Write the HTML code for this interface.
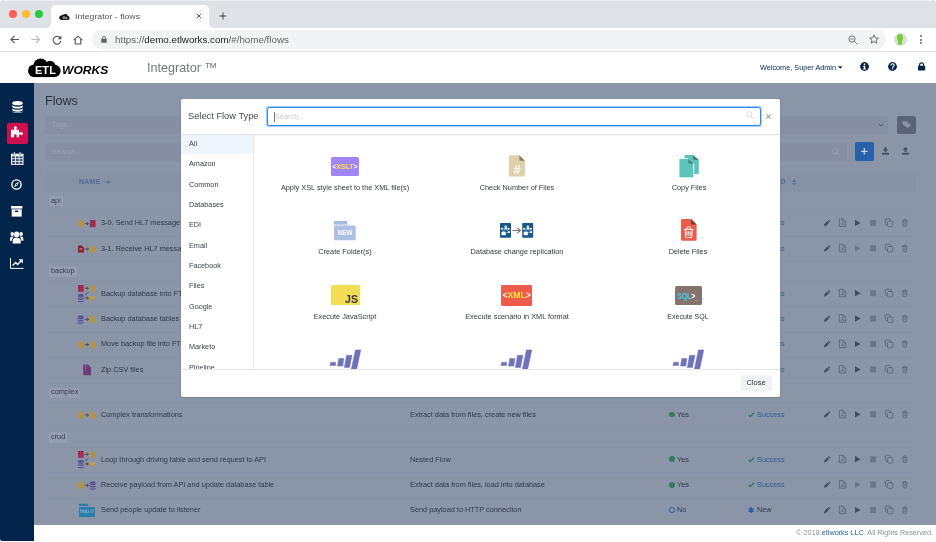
<!DOCTYPE html>
<html lang="en">
<head>
<meta charset="utf-8">
<title>Integrator - flows</title>
<style>
*{box-sizing:border-box;margin:0;padding:0}
html,body{width:936px;height:542px;overflow:hidden;background:#fff}
body{font-family:"Liberation Sans",sans-serif;color:#23282c;position:relative;font-size:7.8px}
.a{position:absolute}
.t{position:absolute;white-space:nowrap}
svg{position:absolute;overflow:visible}
#w{position:absolute;left:0;top:0;width:936px;height:542px;will-change:transform;overflow:hidden}

</style>
</head>
<body>
<div id="w">
<!-- browser chrome -->
<div class="a" style="left:0px;top:0px;width:936px;height:27.7px;background:#dee1e6;border-radius:3px 3px 0 0"></div>
<div class="a" style="left:3px;top:0px;width:930px;height:1px;background:#eaecef;"></div>
<div class="a" style="left:8.7px;top:10.2px;width:8px;height:8px;background:#fe5f57;border-radius:50%"></div>
<div class="a" style="left:21.8px;top:10.2px;width:8px;height:8px;background:#febc2e;border-radius:50%"></div>
<div class="a" style="left:35px;top:10.2px;width:8px;height:8px;background:#28c840;border-radius:50%"></div>
<div class="a" style="left:51px;top:4.8px;width:158px;height:23px;background:#fff;border-radius:5px 5px 0 0"></div>
<svg style="left:45px;top:21.7px" width="170" height="6" viewBox="0 0 170 6"><path d="M0 6 Q6 6 6 0 V6 Z M170 6 Q164 6 164 0 V6 Z" fill="#fff"/></svg>
<svg style="left:59px;top:12.5px" width="11" height="7" viewBox="0 0 22 14"><path d="M5 14 A4.5 4.5 0 0 1 4.5 5 A4 4 0 0 1 9 3.5 A5 5 0 0 1 17.5 5.5 A4.3 4.3 0 0 1 17.5 14 Z" fill="#111"/><circle cx="10" cy="9.3" r="2.2" fill="none" stroke="#fff" stroke-width="1.3"/><circle cx="15" cy="10.2" r="1.5" fill="none" stroke="#fff" stroke-width="1.2"/></svg>
<div class="t" style="top:12.90px;font-size:7.8px;line-height:7.8px;color:#505458;left:75px;transform:scaleX(1.12);transform-origin:0 50%;">Integrator - flows</div>
<svg style="left:195.5px;top:12.7px" width="6" height="6" viewBox="0 0 6 6"><path d="M.7 .7 L5.3 5.3 M5.3 .7 L.7 5.3" stroke="#45494d" stroke-width=".9" fill="none"/></svg>
<svg style="left:219px;top:12px" width="8" height="8" viewBox="0 0 8 8"><path d="M4 .6 V7.4 M.6 4 H7.4" stroke="#45494d" stroke-width="1" fill="none"/></svg>
<div class="a" style="left:0px;top:27.7px;width:936px;height:23.3px;background:#fff;"></div>
<div class="a" style="left:0px;top:50.8px;width:936px;height:0.8px;background:#dfe1e4;"></div>
<div class="a" style="left:91.8px;top:30.4px;width:794px;height:18.2px;background:#f1f3f4;border-radius:9.1px"></div>
<svg style="left:10px;top:35px" width="9.5" height="9" viewBox="0 0 9.5 9"><path d="M9 4.5 H1 M4.6 .8 L.9 4.5 L4.6 8.2" stroke="#51565b" stroke-width="1.12" fill="none"/></svg>
<svg style="left:31px;top:35px" width="9.5" height="9" viewBox="0 0 9.5 9"><path d="M.5 4.5 H8.5 M4.9 .8 L8.6 4.5 L4.9 8.2" stroke="#b4b8bd" stroke-width="1.2" fill="none"/></svg>
<svg style="left:51.7px;top:34.6px" width="10" height="10" viewBox="0 0 10 10"><path d="M8.2 3 A3.9 3.9 0 1 0 8.9 5.8" stroke="#51565b" stroke-width="1.12" fill="none"/><path d="M9.4 .5 V4.2 H5.7 Z" fill="#51565b"/></svg>
<svg style="left:72.7px;top:34.6px" width="10" height="10" viewBox="0 0 10 10"><path d="M.6 5.2 L5 1.2 L9.4 5.2 M2.2 4 V9 H7.8 V4" stroke="#51565b" stroke-width="1.12" fill="none" stroke-linejoin="miter"/></svg>
<svg style="left:101px;top:36px" width="6" height="7" viewBox="0 0 6 7"><rect x=".3" y="2.8" width="5.4" height="4" rx=".5" fill="#5f6368"/><path d="M1.5 3 V2 A1.5 1.5 0 0 1 4.5 2 V3" stroke="#5f6368" stroke-width=".9" fill="none"/></svg>
<div class="t" style="top:35.60px;font-size:9.1px;line-height:9.1px;color:#202124;left:114.7px;transform:scaleX(1.075);transform-origin:0 50%;"><span style="color:#5f6368">https://</span>demo.etlworks.com<span style="color:#5f6368">/#/home/flows</span></div>
<svg style="left:848px;top:34.5px" width="10" height="10" viewBox="0 0 10 10"><circle cx="4" cy="4" r="3.1" stroke="#5f6368" stroke-width=".9" fill="none"/><path d="M6.3 6.3 L9.3 9.3 M2.5 4 H5.5" stroke="#5f6368" stroke-width=".9" fill="none"/></svg>
<svg style="left:869px;top:34.3px" width="10" height="10" viewBox="0 0 10 10"><path d="M5 .9 L6.25 3.8 L9.4 4.05 L7 6.1 L7.75 9.2 L5 7.55 L2.25 9.2 L3 6.1 L.6 4.05 L3.75 3.8 Z" stroke="#5f6368" stroke-width=".9" fill="none" stroke-linejoin="round"/></svg>
<div class="a" style="left:893.7px;top:32.9px;width:13px;height:13px;background:#dadce0;border-radius:50%"></div>
<svg style="left:896.2px;top:34.4px" width="8" height="10.5" viewBox="0 0 8 10.5"><path d="M4 0 C6.4 0 7.3 2 7 4.3 C6.8 6 6 6.8 5.8 8 L6.2 10.5 H1.8 L2.2 8 C2 6.8 1.2 6 1 4.3 C.7 2 1.6 0 4 0 Z" fill="#76d02b"/></svg>
<div class="a" style="left:920.3px;top:34.7px;width:2px;height:2px;background:#5f6368;border-radius:50%"></div>
<div class="a" style="left:920.3px;top:38.5px;width:2px;height:2px;background:#5f6368;border-radius:50%"></div>
<div class="a" style="left:920.3px;top:42.3px;width:2px;height:2px;background:#5f6368;border-radius:50%"></div>
<!-- app header -->
<div class="a" style="left:0px;top:51.7px;width:936px;height:31.3px;background:#fff;"></div>
<svg style="left:28px;top:58px" width="33" height="19.4" viewBox="0 0 33 19.4"><g fill="#000"><circle cx="6.3" cy="12.8" r="6.3"/><circle cx="26.4" cy="12.9" r="6.2"/><circle cx="12.6" cy="7.6" r="7.2"/><circle cx="22" cy="8.4" r="5.6"/><rect x="6.3" y="8" width="20.1" height="11.1"/></g></svg>
<div class="t" style="top:64.59px;font-size:11px;line-height:11px;color:#fff;font-weight:bold;letter-spacing:0.1px;left:34.9px;transform:scaleX(1.0);transform-origin:0 50%;">ETL</div>
<div class="t" style="top:64.59px;font-size:11px;line-height:11px;color:#000;font-weight:bold;left:62.4px;transform:scaleX(1.1);transform-origin:0 50%;font-style:italic;">WORKS</div>
<div class="t" style="top:60.80px;font-size:13px;line-height:13px;color:#73777b;left:147px;transform:scaleX(0.97);transform-origin:0 50%;">Integrator ™</div>
<div class="t" style="top:63.70px;font-size:7.8px;line-height:7.8px;color:#03254c;left:759.6px;transform:scaleX(0.935);transform-origin:0 50%;">Welcome, Super Admin</div>
<svg style="left:838px;top:65.8px" width="4.5" height="3" viewBox="0 0 4.5 3"><path d="M0 .3 H4.5 L2.25 2.7 Z" fill="#03254c"/></svg>
<svg style="left:859.8px;top:62.1px" width="9" height="9" viewBox="0 0 9 9"><circle cx="4.5" cy="4.5" r="4.4" fill="#03254c"/><rect x="3.8" y="1.5" width="1.5" height="1.5" fill="#fff"/><path d="M3.2 3.8 H5.3 V6.6 H6 V7.5 H3.1 V6.6 H3.8 V4.7 H3.2 Z" fill="#fff"/></svg>
<svg style="left:888.4px;top:62.1px" width="9" height="9" viewBox="0 0 9 9"><circle cx="4.5" cy="4.5" r="4.4" fill="#03254c"/><path d="M3 3.5 A1.6 1.5 0 1 1 5.2 4.7 Q4.55 5 4.55 5.7" stroke="#fff" stroke-width="1.1" fill="none"/><rect x="3.95" y="6.3" width="1.2" height="1.1" fill="#fff"/></svg>
<svg style="left:918px;top:62.2px" width="7.2" height="8.6" viewBox="0 0 7.6 9"><rect x="0" y="4" width="7.6" height="5" rx=".6" fill="#03254c"/><path d="M1.7 4.3 V3 A2.1 2.1 0 0 1 5.9 3 V4.3" stroke="#03254c" stroke-width="1.2" fill="none"/></svg>
<!-- overlayed content -->
<div class="a" style="left:34px;top:83px;width:902px;height:441.6px;background:#8b95a8;"></div>
<div class="t" style="top:93.90px;font-size:13px;line-height:13px;color:#2b303d;left:45px;transform:scaleX(0.97);transform-origin:0 50%;">Flows</div>
<div class="a" style="left:45px;top:115.6px;width:843.4px;height:18.4px;background:#858ea3;border-radius:2px"></div>
<div class="t" style="top:121.00px;font-size:7.8px;line-height:7.8px;color:#99a2b5;left:52.3px;transform:scaleX(0.94);transform-origin:0 50%;">Tags...</div>
<svg style="left:877.5px;top:122.5px" width="6" height="4" viewBox="0 0 6 4"><path d="M.5 .6 L3 3.1 L5.5 .6" stroke="#4a5163" stroke-width=".9" fill="none"/></svg>
<div class="a" style="left:896.5px;top:115.6px;width:19px;height:18.4px;background:#5b6376;border-radius:2px"></div>
<svg style="left:901.5px;top:120.2px" width="9" height="9" viewBox="0 0 9 9"><path d="M.6 1.2 H3.8 L8.3 5.3 L5.6 8 L.6 4 Z" fill="#8e96a9"/><path d="M4.6 1.2 L8.9 5.2 L6.7 7.6" stroke="#8e96a9" stroke-width=".7" fill="none"/></svg>
<div class="a" style="left:45px;top:142.6px;width:801.5px;height:18.4px;background:#858ea3;border-radius:2px"></div>
<div class="t" style="top:148.00px;font-size:7.8px;line-height:7.8px;color:#99a2b5;left:52.3px;transform:scaleX(0.94);transform-origin:0 50%;">Search...</div>
<svg style="left:832px;top:147.5px" width="8" height="8" viewBox="0 0 8 8"><circle cx="3.2" cy="3.2" r="2.5" stroke="#9ea6b8" stroke-width=".8" fill="none"/><path d="M5 5 L7.4 7.4" stroke="#9ea6b8" stroke-width=".8"/></svg>
<div class="a" style="left:855px;top:142.3px;width:19px;height:18.7px;background:#2961a8;border-radius:2px"></div>
<svg style="left:861.2px;top:148.4px" width="6.6" height="6.6" viewBox="0 0 6.6 6.6"><path d="M3.3 0 V6.6 M0 3.3 H6.6" stroke="#c5cede" stroke-width="1.3"/></svg>
<svg style="left:881.7px;top:147px" width="7" height="8" viewBox="0 0 7 8"><path d="M2.6 0 H4.4 V2.6 H6.2 L3.5 5.3 L.8 2.6 H2.6 Z" fill="#464d5e"/><path d="M0 5.8 H7 V7.6 H0 Z" fill="#464d5e"/></svg>
<svg style="left:902.2px;top:147px" width="7" height="8" viewBox="0 0 7 8"><path d="M2.6 5 H4.4 V2.7 H6.2 L3.5 0 L.8 2.7 H2.6 Z" fill="#464d5e"/><path d="M0 5.8 H7 V7.6 H0 Z" fill="#464d5e"/></svg>
<div class="a" style="left:45px;top:172px;width:870.8px;height:19.5px;background:#8791a5;"></div>
<div class="t" style="top:178.37px;font-size:7px;line-height:7px;color:#546b99;font-weight:bold;letter-spacing:0.25px;left:79px;transform:scaleX(1);transform-origin:0 50%;">NAME</div>
<svg style="left:105.5px;top:180.8px" width="4.4" height="3" viewBox="0 0 4.4 3"><path d="M0 .2 H4.4 L2.2 2.8 Z" fill="#546b99"/></svg>
<div class="t" style="top:178.37px;font-size:7px;line-height:7px;color:#546b99;font-weight:bold;left:780.6px;transform:scaleX(1);transform-origin:0 50%;">D</div>
<svg style="left:791.9px;top:178.5px" width="4.2" height="6.6" viewBox="0 0 4.4 7.4" preserveAspectRatio="none"><path d="M0 3 L2.2 .3 L4.4 3 Z M0 4.4 L2.2 7.1 L4.4 4.4 Z" fill="#546b99"/></svg>
<div class="a" style="left:49px;top:196.1px;width:13.8px;height:10.2px;background:#959eb1;border-radius:1.5px"></div>
<div class="t" style="top:197.00px;font-size:7.8px;line-height:7.8px;color:#353c4c;left:51.2px;transform:scaleX(0.94);transform-origin:0 50%;">api</div>
<div class="a" style="left:45px;top:210.6px;width:870.8px;height:0.8px;background:#8791a7;"></div>
<div class="t" style="top:219.20px;font-size:7.8px;line-height:7.8px;color:#30374a;left:100.9px;transform:scaleX(0.94);transform-origin:0 50%;">3-0. Send HL7 message to</div>
<div class="a" style="left:668.8px;top:220.10000000000002px;width:5.8px;height:5.8px;background:#2e7d5b;border-radius:50%"></div>
<div class="t" style="top:219.20px;font-size:7.8px;line-height:7.8px;color:#30374a;left:677px;transform:scaleX(0.94);transform-origin:0 50%;">Yes</div>
<svg style="left:748px;top:220.20000000000002px" width="6.4" height="5.4" viewBox="0 0 6.4 5.4"><path d="M.5 2.9 L2.3 4.6 L5.9 .7" stroke="#2b7a57" stroke-width="1.3" fill="none"/></svg>
<div class="t" style="top:219.20px;font-size:7.8px;line-height:7.8px;color:#2c5b95;left:756.9px;transform:scaleX(0.94);transform-origin:0 50%;">Success</div>
<svg style="left:0;top:0" width="936" height="542"><path d="M78 220.1 h3.72 l2.28 2.28 v4.72 h-6 Z" fill="#b1924c"/><path d="M84.8 223.6 h3.6 M87.0 222.2 l1.5 1.4 l-1.5 1.4" stroke="#3b4252" stroke-width=".85" fill="none"/><rect x="90.0" y="220.1" width="5.4" height="7" fill="#9e1d46"/><rect x="90.0" y="221.65" width="5.4" height=".4" fill="#b5496a"/><rect x="90.0" y="223.40" width="5.4" height=".4" fill="#b5496a"/><rect x="90.0" y="225.15" width="5.4" height=".4" fill="#b5496a"/><rect x="91.94" y="220.1" width=".4" height="7" fill="#b5496a"/></svg>
<svg style="left:0;top:0" width="936" height="542"><path d="M824 226.1 l.4 -2 l3.1 -3.1 l1.6 1.6 l-3.1 3.1 Z" fill="#434a5b"/><path d="M828 220.5 l.5 -.5 a.5 .5 0 0 1 .7 0 l.9 .9 a.5 .5 0 0 1 0 .7 l-.5 .5 Z" fill="#434a5b"/><path d="M839.4 218.9 h3.6 l2.6 2.6 v5 h-6.2 Z" stroke="#596275" stroke-width=".8" fill="none" stroke-linejoin="round"/><path d="M843 218.9 v2.6 h2.6" stroke="#596275" stroke-width=".7" fill="none"/><path d="M841 225.3 l1.5 -3 l1.5 3 M841.6 224.1 h2" stroke="#596275" stroke-width=".6" fill="none"/><path d="M855 219.8 l5.6 3.1 l-5.6 3.1 Z" fill="#434a5b"/><rect x="870.1" y="219.9" width="5.9" height="6" fill="#6c7589"/><rect x="885.4" y="218.9" width="5.2" height="6" rx="1" stroke="#596275" stroke-width=".8" fill="none"/><rect x="887.5" y="221.1" width="5.2" height="5.6" rx="1" stroke="#596275" stroke-width=".8" fill="#8b95a8"/><path d="M902 221.0 h5.6 M903.6 220.9 v-.7 a.6 .6 0 0 1 .6 -.6 h1.2 a.6 .6 0 0 1 .6 .6 v.7" stroke="#596275" stroke-width=".8" fill="none"/><path d="M902.8 221.3 l.3 4.4 a.6 .6 0 0 0 .6 .5 h2.2 a.6 .6 0 0 0 .6 -.5 l.3 -4.4" stroke="#596275" stroke-width=".8" fill="none"/><path d="M903.7 222.70000000000002 h2.2 M903.8 224.1 h2" stroke="#596275" stroke-width=".6" fill="none"/></svg>
<div class="a" style="left:45px;top:236.0px;width:870.8px;height:0.8px;background:#8491a9;"></div>
<div class="t" style="top:244.60px;font-size:7.8px;line-height:7.8px;color:#30374a;left:100.9px;transform:scaleX(0.94);transform-origin:0 50%;">3-1. Receive HL7 message</div>
<div class="a" style="left:668.8px;top:245.50000000000003px;width:5.8px;height:5.8px;background:#2e7d5b;border-radius:50%"></div>
<div class="t" style="top:244.60px;font-size:7.8px;line-height:7.8px;color:#30374a;left:677px;transform:scaleX(0.94);transform-origin:0 50%;">Yes</div>
<svg style="left:748px;top:245.60000000000002px" width="6.4" height="5.4" viewBox="0 0 6.4 5.4"><path d="M.5 2.9 L2.3 4.6 L5.9 .7" stroke="#2b7a57" stroke-width="1.3" fill="none"/></svg>
<div class="t" style="top:244.60px;font-size:7.8px;line-height:7.8px;color:#2c5b95;left:756.9px;transform:scaleX(0.94);transform-origin:0 50%;">Success</div>
<svg style="left:0;top:0" width="936" height="542"><path d="M78 245.5 h3.72 l2.28 2.28 v4.72 h-6 Z" fill="#8c1c2e"/><path d="M79.5 248.5 h3 M79.5 249.9 h3" stroke="#d9a0a8" stroke-width=".6"/><path d="M84.8 249.0 h3.6 M87.0 247.6 l1.5 1.4 l-1.5 1.4" stroke="#3b4252" stroke-width=".85" fill="none"/><path d="M89.6 245.5 h3.72 l2.28 2.28 v4.72 h-6 Z" fill="#b1924c"/></svg>
<svg style="left:0;top:0" width="936" height="542"><path d="M824 251.5 l.4 -2 l3.1 -3.1 l1.6 1.6 l-3.1 3.1 Z" fill="#434a5b"/><path d="M828 245.9 l.5 -.5 a.5 .5 0 0 1 .7 0 l.9 .9 a.5 .5 0 0 1 0 .7 l-.5 .5 Z" fill="#434a5b"/><path d="M839.4 244.3 h3.6 l2.6 2.6 v5 h-6.2 Z" stroke="#596275" stroke-width=".8" fill="none" stroke-linejoin="round"/><path d="M843 244.3 v2.6 h2.6" stroke="#596275" stroke-width=".7" fill="none"/><path d="M841 250.70000000000002 l1.5 -3 l1.5 3 M841.6 249.5 h2" stroke="#596275" stroke-width=".6" fill="none"/><path d="M855 245.20000000000002 l5.6 3.1 l-5.6 3.1 Z" fill="#6c7589"/><rect x="870.1" y="245.3" width="5.9" height="6" fill="#6c7589"/><rect x="885.4" y="244.3" width="5.2" height="6" rx="1" stroke="#596275" stroke-width=".8" fill="none"/><rect x="887.5" y="246.5" width="5.2" height="5.6" rx="1" stroke="#596275" stroke-width=".8" fill="#8b95a8"/><path d="M902 246.4 h5.6 M903.6 246.3 v-.7 a.6 .6 0 0 1 .6 -.6 h1.2 a.6 .6 0 0 1 .6 .6 v.7" stroke="#596275" stroke-width=".8" fill="none"/><path d="M902.8 246.70000000000002 l.3 4.4 a.6 .6 0 0 0 .6 .5 h2.2 a.6 .6 0 0 0 .6 -.5 l.3 -4.4" stroke="#596275" stroke-width=".8" fill="none"/><path d="M903.7 248.10000000000002 h2.2 M903.8 249.5 h2" stroke="#596275" stroke-width=".6" fill="none"/></svg>
<div class="a" style="left:45px;top:261.40000000000003px;width:870.8px;height:0.8px;background:#8791a7;"></div>
<div class="a" style="left:49px;top:266.40000000000003px;width:27.8px;height:10.2px;background:#959eb1;border-radius:1.5px"></div>
<div class="t" style="top:267.30px;font-size:7.8px;line-height:7.8px;color:#353c4c;left:51.2px;transform:scaleX(0.94);transform-origin:0 50%;">backup</div>
<div class="a" style="left:45px;top:280.90000000000003px;width:870.8px;height:0.8px;background:#8791a7;"></div>
<div class="t" style="top:289.50px;font-size:7.8px;line-height:7.8px;color:#30374a;left:100.9px;transform:scaleX(0.94);transform-origin:0 50%;">Backup database into FTP</div>
<div class="a" style="left:668.8px;top:290.40000000000003px;width:5.8px;height:5.8px;background:#2e7d5b;border-radius:50%"></div>
<div class="t" style="top:289.50px;font-size:7.8px;line-height:7.8px;color:#30374a;left:677px;transform:scaleX(0.94);transform-origin:0 50%;">Yes</div>
<svg style="left:748px;top:290.5px" width="6.4" height="5.4" viewBox="0 0 6.4 5.4"><path d="M.5 2.9 L2.3 4.6 L5.9 .7" stroke="#2b7a57" stroke-width="1.3" fill="none"/></svg>
<div class="t" style="top:289.50px;font-size:7.8px;line-height:7.8px;color:#2c5b95;left:756.9px;transform:scaleX(0.94);transform-origin:0 50%;">Success</div>
<svg style="left:0;top:0" width="936" height="542"><rect x="78.1" y="285.00000000000006" width="5.5" height="6.7" fill="#9e1d46"/><rect x="78.1" y="286.48" width="5.5" height=".4" fill="#b5496a"/><rect x="78.1" y="288.15" width="5.5" height=".4" fill="#b5496a"/><rect x="78.1" y="289.83" width="5.5" height=".4" fill="#b5496a"/><rect x="80.08" y="285.00000000000006" width=".4" height="6.7" fill="#b5496a"/><path d="M84.6 288.3 h3.6 M86.8 286.90000000000003 l1.5 1.4 l-1.5 1.4" stroke="#3b4252" stroke-width=".85" fill="none"/><path d="M90 285.00000000000006 h3.22 l1.98 1.98 v4.72 h-5.2 Z" fill="#b1924c"/><path d="M85 293.50000000000006 l1.1 1 l2.2 -2.4" stroke="#3b4252" stroke-width=".8" fill="none"/><path d="M78 295.30 a2.9 1.2 0 0 0 5.8 0 v1.2 a2.9 1.2 0 0 1 -5.8 0 Z" fill="#584b91"/><path d="M78 297.60 a2.9 1.2 0 0 0 5.8 0 v1.2 a2.9 1.2 0 0 1 -5.8 0 Z" fill="#584b91"/><path d="M78 299.90 a2.9 1.2 0 0 0 5.8 0 v1.2 a2.9 1.2 0 0 1 -5.8 0 Z" fill="#584b91"/><ellipse cx="80.9" cy="295.20" rx="2.9" ry="1.1" fill="#584b91"/><path d="M84.6 297.90000000000003 h3.6 M86.8 296.50000000000006 l1.5 1.4 l-1.5 1.4" stroke="#3b4252" stroke-width=".85" fill="none"/><rect x="89" y="295.90000000000003" width="6.1" height="4.3" fill="#b1924c"/><path d="M89 296.20000000000005 l3.05 2.37 l3.05 -2.37" stroke="#d9c48f" stroke-width=".5" fill="none"/></svg>
<svg style="left:0;top:0" width="936" height="542"><path d="M824 296.40000000000003 l.4 -2 l3.1 -3.1 l1.6 1.6 l-3.1 3.1 Z" fill="#434a5b"/><path d="M828 290.80000000000007 l.5 -.5 a.5 .5 0 0 1 .7 0 l.9 .9 a.5 .5 0 0 1 0 .7 l-.5 .5 Z" fill="#434a5b"/><path d="M839.4 289.20000000000005 h3.6 l2.6 2.6 v5 h-6.2 Z" stroke="#596275" stroke-width=".8" fill="none" stroke-linejoin="round"/><path d="M843 289.20000000000005 v2.6 h2.6" stroke="#596275" stroke-width=".7" fill="none"/><path d="M841 295.6 l1.5 -3 l1.5 3 M841.6 294.40000000000003 h2" stroke="#596275" stroke-width=".6" fill="none"/><path d="M855 290.1 l5.6 3.1 l-5.6 3.1 Z" fill="#434a5b"/><rect x="870.1" y="290.20000000000005" width="5.9" height="6" fill="#6c7589"/><rect x="885.4" y="289.20000000000005" width="5.2" height="6" rx="1" stroke="#596275" stroke-width=".8" fill="none"/><rect x="887.5" y="291.40000000000003" width="5.2" height="5.6" rx="1" stroke="#596275" stroke-width=".8" fill="#8b95a8"/><path d="M902 291.30000000000007 h5.6 M903.6 291.20000000000005 v-.7 a.6 .6 0 0 1 .6 -.6 h1.2 a.6 .6 0 0 1 .6 .6 v.7" stroke="#596275" stroke-width=".8" fill="none"/><path d="M902.8 291.6 l.3 4.4 a.6 .6 0 0 0 .6 .5 h2.2 a.6 .6 0 0 0 .6 -.5 l.3 -4.4" stroke="#596275" stroke-width=".8" fill="none"/><path d="M903.7 293.00000000000006 h2.2 M903.8 294.40000000000003 h2" stroke="#596275" stroke-width=".6" fill="none"/></svg>
<div class="a" style="left:45px;top:306.3px;width:870.8px;height:0.8px;background:#8491a9;"></div>
<div class="t" style="top:314.90px;font-size:7.8px;line-height:7.8px;color:#30374a;left:100.9px;transform:scaleX(0.94);transform-origin:0 50%;">Backup database tables</div>
<div class="a" style="left:668.8px;top:315.8px;width:5.8px;height:5.8px;background:#2e7d5b;border-radius:50%"></div>
<div class="t" style="top:314.90px;font-size:7.8px;line-height:7.8px;color:#30374a;left:677px;transform:scaleX(0.94);transform-origin:0 50%;">Yes</div>
<svg style="left:748px;top:315.9px" width="6.4" height="5.4" viewBox="0 0 6.4 5.4"><path d="M.5 2.9 L2.3 4.6 L5.9 .7" stroke="#2b7a57" stroke-width="1.3" fill="none"/></svg>
<div class="t" style="top:314.90px;font-size:7.8px;line-height:7.8px;color:#2c5b95;left:756.9px;transform:scaleX(0.94);transform-origin:0 50%;">Success</div>
<svg style="left:0;top:0" width="936" height="542"><path d="M77.6 316.80 a3.0 1.2 0 0 0 6 0 v1.2 a3.0 1.2 0 0 1 -6 0 Z" fill="#584b91"/><path d="M77.6 319.10 a3.0 1.2 0 0 0 6 0 v1.2 a3.0 1.2 0 0 1 -6 0 Z" fill="#584b91"/><path d="M77.6 321.40 a3.0 1.2 0 0 0 6 0 v1.2 a3.0 1.2 0 0 1 -6 0 Z" fill="#584b91"/><ellipse cx="80.6" cy="316.70" rx="3.0" ry="1.1" fill="#584b91"/><path d="M84.8 319.3 h3.6 M87.0 317.90000000000003 l1.5 1.4 l-1.5 1.4" stroke="#3b4252" stroke-width=".85" fill="none"/><path d="M89.6 315.8 h3.72 l2.28 2.28 v4.72 h-6 Z" fill="#b1924c"/></svg>
<svg style="left:0;top:0" width="936" height="542"><path d="M824 321.8 l.4 -2 l3.1 -3.1 l1.6 1.6 l-3.1 3.1 Z" fill="#434a5b"/><path d="M828 316.20000000000005 l.5 -.5 a.5 .5 0 0 1 .7 0 l.9 .9 a.5 .5 0 0 1 0 .7 l-.5 .5 Z" fill="#434a5b"/><path d="M839.4 314.6 h3.6 l2.6 2.6 v5 h-6.2 Z" stroke="#596275" stroke-width=".8" fill="none" stroke-linejoin="round"/><path d="M843 314.6 v2.6 h2.6" stroke="#596275" stroke-width=".7" fill="none"/><path d="M841 321.0 l1.5 -3 l1.5 3 M841.6 319.8 h2" stroke="#596275" stroke-width=".6" fill="none"/><path d="M855 315.5 l5.6 3.1 l-5.6 3.1 Z" fill="#434a5b"/><rect x="870.1" y="315.6" width="5.9" height="6" fill="#6c7589"/><rect x="885.4" y="314.6" width="5.2" height="6" rx="1" stroke="#596275" stroke-width=".8" fill="none"/><rect x="887.5" y="316.8" width="5.2" height="5.6" rx="1" stroke="#596275" stroke-width=".8" fill="#8b95a8"/><path d="M902 316.70000000000005 h5.6 M903.6 316.6 v-.7 a.6 .6 0 0 1 .6 -.6 h1.2 a.6 .6 0 0 1 .6 .6 v.7" stroke="#596275" stroke-width=".8" fill="none"/><path d="M902.8 317.0 l.3 4.4 a.6 .6 0 0 0 .6 .5 h2.2 a.6 .6 0 0 0 .6 -.5 l.3 -4.4" stroke="#596275" stroke-width=".8" fill="none"/><path d="M903.7 318.40000000000003 h2.2 M903.8 319.8 h2" stroke="#596275" stroke-width=".6" fill="none"/></svg>
<div class="a" style="left:45px;top:331.7px;width:870.8px;height:0.8px;background:#8491a9;"></div>
<div class="t" style="top:340.30px;font-size:7.8px;line-height:7.8px;color:#30374a;left:100.9px;transform:scaleX(0.94);transform-origin:0 50%;">Move backup file into FTP</div>
<div class="a" style="left:668.8px;top:341.2px;width:5.8px;height:5.8px;background:#2e7d5b;border-radius:50%"></div>
<div class="t" style="top:340.30px;font-size:7.8px;line-height:7.8px;color:#30374a;left:677px;transform:scaleX(0.94);transform-origin:0 50%;">Yes</div>
<svg style="left:748px;top:341.29999999999995px" width="6.4" height="5.4" viewBox="0 0 6.4 5.4"><path d="M.5 2.9 L2.3 4.6 L5.9 .7" stroke="#2b7a57" stroke-width="1.3" fill="none"/></svg>
<div class="t" style="top:340.30px;font-size:7.8px;line-height:7.8px;color:#2c5b95;left:756.9px;transform:scaleX(0.94);transform-origin:0 50%;">Success</div>
<svg style="left:0;top:0" width="936" height="542"><path d="M78 341.2 h3.72 l2.28 2.28 v4.72 h-6 Z" fill="#b1924c"/><path d="M84.8 344.7 h3.6 M87.0 343.3 l1.5 1.4 l-1.5 1.4" stroke="#3b4252" stroke-width=".85" fill="none"/><path d="M89.6 341.2 h3.72 l2.28 2.28 v4.72 h-6 Z" fill="#b1924c"/></svg>
<svg style="left:0;top:0" width="936" height="542"><path d="M824 347.2 l.4 -2 l3.1 -3.1 l1.6 1.6 l-3.1 3.1 Z" fill="#434a5b"/><path d="M828 341.6 l.5 -.5 a.5 .5 0 0 1 .7 0 l.9 .9 a.5 .5 0 0 1 0 .7 l-.5 .5 Z" fill="#434a5b"/><path d="M839.4 340.0 h3.6 l2.6 2.6 v5 h-6.2 Z" stroke="#596275" stroke-width=".8" fill="none" stroke-linejoin="round"/><path d="M843 340.0 v2.6 h2.6" stroke="#596275" stroke-width=".7" fill="none"/><path d="M841 346.4 l1.5 -3 l1.5 3 M841.6 345.2 h2" stroke="#596275" stroke-width=".6" fill="none"/><path d="M855 340.9 l5.6 3.1 l-5.6 3.1 Z" fill="#434a5b"/><rect x="870.1" y="341.0" width="5.9" height="6" fill="#6c7589"/><rect x="885.4" y="340.0" width="5.2" height="6" rx="1" stroke="#596275" stroke-width=".8" fill="none"/><rect x="887.5" y="342.2" width="5.2" height="5.6" rx="1" stroke="#596275" stroke-width=".8" fill="#8b95a8"/><path d="M902 342.1 h5.6 M903.6 342.0 v-.7 a.6 .6 0 0 1 .6 -.6 h1.2 a.6 .6 0 0 1 .6 .6 v.7" stroke="#596275" stroke-width=".8" fill="none"/><path d="M902.8 342.4 l.3 4.4 a.6 .6 0 0 0 .6 .5 h2.2 a.6 .6 0 0 0 .6 -.5 l.3 -4.4" stroke="#596275" stroke-width=".8" fill="none"/><path d="M903.7 343.8 h2.2 M903.8 345.2 h2" stroke="#596275" stroke-width=".6" fill="none"/></svg>
<div class="a" style="left:45px;top:357.09999999999997px;width:870.8px;height:0.8px;background:#8491a9;"></div>
<div class="t" style="top:365.70px;font-size:7.8px;line-height:7.8px;color:#30374a;left:100.9px;transform:scaleX(0.94);transform-origin:0 50%;">Zip CSV files</div>
<div class="a" style="left:668.8px;top:366.59999999999997px;width:5.8px;height:5.8px;background:#2e7d5b;border-radius:50%"></div>
<div class="t" style="top:365.70px;font-size:7.8px;line-height:7.8px;color:#30374a;left:677px;transform:scaleX(0.94);transform-origin:0 50%;">Yes</div>
<svg style="left:748px;top:366.69999999999993px" width="6.4" height="5.4" viewBox="0 0 6.4 5.4"><path d="M.5 2.9 L2.3 4.6 L5.9 .7" stroke="#2b7a57" stroke-width="1.3" fill="none"/></svg>
<div class="t" style="top:365.70px;font-size:7.8px;line-height:7.8px;color:#2c5b95;left:756.9px;transform:scaleX(0.94);transform-origin:0 50%;">Success</div>
<svg style="left:0;top:0" width="936" height="542"><path d="M83.2 364.49999999999994 h4.84 l2.96 2.96 v7.84 h-7.8 Z" fill="#6e3b7a"/><path d="M85.6 364.7 v6" stroke="#a98ab0" stroke-width=".9" stroke-dasharray=".9 .9"/></svg>
<svg style="left:0;top:0" width="936" height="542"><path d="M824 372.59999999999997 l.4 -2 l3.1 -3.1 l1.6 1.6 l-3.1 3.1 Z" fill="#434a5b"/><path d="M828 367.0 l.5 -.5 a.5 .5 0 0 1 .7 0 l.9 .9 a.5 .5 0 0 1 0 .7 l-.5 .5 Z" fill="#434a5b"/><path d="M839.4 365.4 h3.6 l2.6 2.6 v5 h-6.2 Z" stroke="#596275" stroke-width=".8" fill="none" stroke-linejoin="round"/><path d="M843 365.4 v2.6 h2.6" stroke="#596275" stroke-width=".7" fill="none"/><path d="M841 371.79999999999995 l1.5 -3 l1.5 3 M841.6 370.59999999999997 h2" stroke="#596275" stroke-width=".6" fill="none"/><path d="M855 366.29999999999995 l5.6 3.1 l-5.6 3.1 Z" fill="#434a5b"/><rect x="870.1" y="366.4" width="5.9" height="6" fill="#6c7589"/><rect x="885.4" y="365.4" width="5.2" height="6" rx="1" stroke="#596275" stroke-width=".8" fill="none"/><rect x="887.5" y="367.59999999999997" width="5.2" height="5.6" rx="1" stroke="#596275" stroke-width=".8" fill="#8b95a8"/><path d="M902 367.5 h5.6 M903.6 367.4 v-.7 a.6 .6 0 0 1 .6 -.6 h1.2 a.6 .6 0 0 1 .6 .6 v.7" stroke="#596275" stroke-width=".8" fill="none"/><path d="M902.8 367.79999999999995 l.3 4.4 a.6 .6 0 0 0 .6 .5 h2.2 a.6 .6 0 0 0 .6 -.5 l.3 -4.4" stroke="#596275" stroke-width=".8" fill="none"/><path d="M903.7 369.2 h2.2 M903.8 370.59999999999997 h2" stroke="#596275" stroke-width=".6" fill="none"/></svg>
<div class="a" style="left:45px;top:382.49999999999994px;width:870.8px;height:0.8px;background:#8791a7;"></div>
<div class="a" style="left:49px;top:387.49999999999994px;width:31px;height:10.2px;background:#959eb1;border-radius:1.5px"></div>
<div class="t" style="top:388.40px;font-size:7.8px;line-height:7.8px;color:#353c4c;left:51.2px;transform:scaleX(0.94);transform-origin:0 50%;">complex</div>
<div class="a" style="left:45px;top:401.99999999999994px;width:870.8px;height:0.8px;background:#8791a7;"></div>
<div class="t" style="top:410.60px;font-size:7.8px;line-height:7.8px;color:#30374a;left:100.9px;transform:scaleX(0.94);transform-origin:0 50%;">Complex transformations</div>
<div class="t" style="top:410.60px;font-size:7.8px;line-height:7.8px;color:#30374a;left:410px;transform:scaleX(0.94);transform-origin:0 50%;">Extract data from files, create new files</div>
<div class="a" style="left:668.8px;top:411.49999999999994px;width:5.8px;height:5.8px;background:#2e7d5b;border-radius:50%"></div>
<div class="t" style="top:410.60px;font-size:7.8px;line-height:7.8px;color:#30374a;left:677px;transform:scaleX(0.94);transform-origin:0 50%;">Yes</div>
<svg style="left:748px;top:411.5999999999999px" width="6.4" height="5.4" viewBox="0 0 6.4 5.4"><path d="M.5 2.9 L2.3 4.6 L5.9 .7" stroke="#2b7a57" stroke-width="1.3" fill="none"/></svg>
<div class="t" style="top:410.60px;font-size:7.8px;line-height:7.8px;color:#2c5b95;left:756.9px;transform:scaleX(0.94);transform-origin:0 50%;">Success</div>
<svg style="left:0;top:0" width="936" height="542"><path d="M78 411.49999999999994 h3.72 l2.28 2.28 v4.72 h-6 Z" fill="#b1924c"/><path d="M84.8 414.99999999999994 h3.6 M87.0 413.59999999999997 l1.5 1.4 l-1.5 1.4" stroke="#3b4252" stroke-width=".85" fill="none"/><path d="M89.6 411.49999999999994 h3.72 l2.28 2.28 v4.72 h-6 Z" fill="#b1924c"/></svg>
<svg style="left:0;top:0" width="936" height="542"><path d="M824 417.49999999999994 l.4 -2 l3.1 -3.1 l1.6 1.6 l-3.1 3.1 Z" fill="#434a5b"/><path d="M828 411.9 l.5 -.5 a.5 .5 0 0 1 .7 0 l.9 .9 a.5 .5 0 0 1 0 .7 l-.5 .5 Z" fill="#434a5b"/><path d="M839.4 410.29999999999995 h3.6 l2.6 2.6 v5 h-6.2 Z" stroke="#596275" stroke-width=".8" fill="none" stroke-linejoin="round"/><path d="M843 410.29999999999995 v2.6 h2.6" stroke="#596275" stroke-width=".7" fill="none"/><path d="M841 416.69999999999993 l1.5 -3 l1.5 3 M841.6 415.49999999999994 h2" stroke="#596275" stroke-width=".6" fill="none"/><path d="M855 411.19999999999993 l5.6 3.1 l-5.6 3.1 Z" fill="#434a5b"/><rect x="870.1" y="411.29999999999995" width="5.9" height="6" fill="#6c7589"/><rect x="885.4" y="410.29999999999995" width="5.2" height="6" rx="1" stroke="#596275" stroke-width=".8" fill="none"/><rect x="887.5" y="412.49999999999994" width="5.2" height="5.6" rx="1" stroke="#596275" stroke-width=".8" fill="#8b95a8"/><path d="M902 412.4 h5.6 M903.6 412.29999999999995 v-.7 a.6 .6 0 0 1 .6 -.6 h1.2 a.6 .6 0 0 1 .6 .6 v.7" stroke="#596275" stroke-width=".8" fill="none"/><path d="M902.8 412.69999999999993 l.3 4.4 a.6 .6 0 0 0 .6 .5 h2.2 a.6 .6 0 0 0 .6 -.5 l.3 -4.4" stroke="#596275" stroke-width=".8" fill="none"/><path d="M903.7 414.09999999999997 h2.2 M903.8 415.49999999999994 h2" stroke="#596275" stroke-width=".6" fill="none"/></svg>
<div class="a" style="left:45px;top:427.3999999999999px;width:870.8px;height:0.8px;background:#8791a7;"></div>
<div class="a" style="left:49px;top:432.3999999999999px;width:17.6px;height:10.2px;background:#959eb1;border-radius:1.5px"></div>
<div class="t" style="top:433.30px;font-size:7.8px;line-height:7.8px;color:#353c4c;left:51.2px;transform:scaleX(0.94);transform-origin:0 50%;">crud</div>
<div class="a" style="left:45px;top:446.8999999999999px;width:870.8px;height:0.8px;background:#8791a7;"></div>
<div class="t" style="top:455.50px;font-size:7.8px;line-height:7.8px;color:#30374a;left:100.9px;transform:scaleX(0.94);transform-origin:0 50%;">Loop through driving table and send request to API</div>
<div class="t" style="top:455.50px;font-size:7.8px;line-height:7.8px;color:#30374a;left:410px;transform:scaleX(0.94);transform-origin:0 50%;">Nested Flow</div>
<div class="a" style="left:668.8px;top:456.3999999999999px;width:5.8px;height:5.8px;background:#2e7d5b;border-radius:50%"></div>
<div class="t" style="top:455.50px;font-size:7.8px;line-height:7.8px;color:#30374a;left:677px;transform:scaleX(0.94);transform-origin:0 50%;">Yes</div>
<svg style="left:748px;top:456.4999999999999px" width="6.4" height="5.4" viewBox="0 0 6.4 5.4"><path d="M.5 2.9 L2.3 4.6 L5.9 .7" stroke="#2b7a57" stroke-width="1.3" fill="none"/></svg>
<div class="t" style="top:455.50px;font-size:7.8px;line-height:7.8px;color:#2c5b95;left:756.9px;transform:scaleX(0.94);transform-origin:0 50%;">Success</div>
<svg style="left:0;top:0" width="936" height="542"><rect x="78.1" y="450.99999999999994" width="5.5" height="6.7" fill="#9e1d46"/><rect x="78.1" y="452.47" width="5.5" height=".4" fill="#b5496a"/><rect x="78.1" y="454.15" width="5.5" height=".4" fill="#b5496a"/><rect x="78.1" y="455.82" width="5.5" height=".4" fill="#b5496a"/><rect x="80.08" y="450.99999999999994" width=".4" height="6.7" fill="#b5496a"/><path d="M84.6 454.2999999999999 h3.6 M86.8 452.8999999999999 l1.5 1.4 l-1.5 1.4" stroke="#3b4252" stroke-width=".85" fill="none"/><path d="M90 450.99999999999994 h3.22 l1.98 1.98 v4.72 h-5.2 Z" fill="#b1924c"/><path d="M85 459.49999999999994 l1.1 1 l2.2 -2.4" stroke="#3b4252" stroke-width=".8" fill="none"/><path d="M78 461.30 a2.9 1.2 0 0 0 5.8 0 v1.2 a2.9 1.2 0 0 1 -5.8 0 Z" fill="#584b91"/><path d="M78 463.60 a2.9 1.2 0 0 0 5.8 0 v1.2 a2.9 1.2 0 0 1 -5.8 0 Z" fill="#584b91"/><path d="M78 465.90 a2.9 1.2 0 0 0 5.8 0 v1.2 a2.9 1.2 0 0 1 -5.8 0 Z" fill="#584b91"/><ellipse cx="80.9" cy="461.20" rx="2.9" ry="1.1" fill="#584b91"/><path d="M84.6 463.8999999999999 h3.6 M86.8 462.49999999999994 l1.5 1.4 l-1.5 1.4" stroke="#3b4252" stroke-width=".85" fill="none"/><rect x="89" y="461.8999999999999" width="6.1" height="4.3" fill="#b1924c"/><path d="M89 462.19999999999993 l3.05 2.37 l3.05 -2.37" stroke="#d9c48f" stroke-width=".5" fill="none"/></svg>
<svg style="left:0;top:0" width="936" height="542"><path d="M824 462.3999999999999 l.4 -2 l3.1 -3.1 l1.6 1.6 l-3.1 3.1 Z" fill="#434a5b"/><path d="M828 456.79999999999995 l.5 -.5 a.5 .5 0 0 1 .7 0 l.9 .9 a.5 .5 0 0 1 0 .7 l-.5 .5 Z" fill="#434a5b"/><path d="M839.4 455.19999999999993 h3.6 l2.6 2.6 v5 h-6.2 Z" stroke="#596275" stroke-width=".8" fill="none" stroke-linejoin="round"/><path d="M843 455.19999999999993 v2.6 h2.6" stroke="#596275" stroke-width=".7" fill="none"/><path d="M841 461.5999999999999 l1.5 -3 l1.5 3 M841.6 460.3999999999999 h2" stroke="#596275" stroke-width=".6" fill="none"/><path d="M855 456.0999999999999 l5.6 3.1 l-5.6 3.1 Z" fill="#434a5b"/><rect x="870.1" y="456.19999999999993" width="5.9" height="6" fill="#6c7589"/><rect x="885.4" y="455.19999999999993" width="5.2" height="6" rx="1" stroke="#596275" stroke-width=".8" fill="none"/><rect x="887.5" y="457.3999999999999" width="5.2" height="5.6" rx="1" stroke="#596275" stroke-width=".8" fill="#8b95a8"/><path d="M902 457.29999999999995 h5.6 M903.6 457.19999999999993 v-.7 a.6 .6 0 0 1 .6 -.6 h1.2 a.6 .6 0 0 1 .6 .6 v.7" stroke="#596275" stroke-width=".8" fill="none"/><path d="M902.8 457.5999999999999 l.3 4.4 a.6 .6 0 0 0 .6 .5 h2.2 a.6 .6 0 0 0 .6 -.5 l.3 -4.4" stroke="#596275" stroke-width=".8" fill="none"/><path d="M903.7 458.99999999999994 h2.2 M903.8 460.3999999999999 h2" stroke="#596275" stroke-width=".6" fill="none"/></svg>
<div class="a" style="left:45px;top:472.2999999999999px;width:870.8px;height:0.8px;background:#8491a9;"></div>
<div class="t" style="top:480.90px;font-size:7.8px;line-height:7.8px;color:#30374a;left:100.9px;transform:scaleX(0.94);transform-origin:0 50%;">Receive payload from API and update database table</div>
<div class="t" style="top:480.90px;font-size:7.8px;line-height:7.8px;color:#30374a;left:410px;transform:scaleX(0.94);transform-origin:0 50%;">Extract data from files, load into database</div>
<div class="a" style="left:668.8px;top:481.7999999999999px;width:5.8px;height:5.8px;background:#2e7d5b;border-radius:50%"></div>
<div class="t" style="top:480.90px;font-size:7.8px;line-height:7.8px;color:#30374a;left:677px;transform:scaleX(0.94);transform-origin:0 50%;">Yes</div>
<svg style="left:748px;top:481.89999999999986px" width="6.4" height="5.4" viewBox="0 0 6.4 5.4"><path d="M.5 2.9 L2.3 4.6 L5.9 .7" stroke="#2b7a57" stroke-width="1.3" fill="none"/></svg>
<div class="t" style="top:480.90px;font-size:7.8px;line-height:7.8px;color:#2c5b95;left:756.9px;transform:scaleX(0.94);transform-origin:0 50%;">Success</div>
<svg style="left:0;top:0" width="936" height="542"><path d="M78 481.7999999999999 h3.72 l2.28 2.28 v4.72 h-6 Z" fill="#b1924c"/><path d="M84.8 485.2999999999999 h3.6 M87.0 483.8999999999999 l1.5 1.4 l-1.5 1.4" stroke="#3b4252" stroke-width=".85" fill="none"/><path d="M89.6 482.80 a3.0 1.2 0 0 0 6 0 v1.2 a3.0 1.2 0 0 1 -6 0 Z" fill="#584b91"/><path d="M89.6 485.10 a3.0 1.2 0 0 0 6 0 v1.2 a3.0 1.2 0 0 1 -6 0 Z" fill="#584b91"/><path d="M89.6 487.40 a3.0 1.2 0 0 0 6 0 v1.2 a3.0 1.2 0 0 1 -6 0 Z" fill="#584b91"/><ellipse cx="92.6" cy="482.70" rx="3.0" ry="1.1" fill="#584b91"/></svg>
<svg style="left:0;top:0" width="936" height="542"><path d="M824 487.7999999999999 l.4 -2 l3.1 -3.1 l1.6 1.6 l-3.1 3.1 Z" fill="#434a5b"/><path d="M828 482.19999999999993 l.5 -.5 a.5 .5 0 0 1 .7 0 l.9 .9 a.5 .5 0 0 1 0 .7 l-.5 .5 Z" fill="#434a5b"/><path d="M839.4 480.5999999999999 h3.6 l2.6 2.6 v5 h-6.2 Z" stroke="#596275" stroke-width=".8" fill="none" stroke-linejoin="round"/><path d="M843 480.5999999999999 v2.6 h2.6" stroke="#596275" stroke-width=".7" fill="none"/><path d="M841 486.9999999999999 l1.5 -3 l1.5 3 M841.6 485.7999999999999 h2" stroke="#596275" stroke-width=".6" fill="none"/><path d="M855 481.4999999999999 l5.6 3.1 l-5.6 3.1 Z" fill="#6c7589"/><rect x="870.1" y="481.5999999999999" width="5.9" height="6" fill="#6c7589"/><rect x="885.4" y="480.5999999999999" width="5.2" height="6" rx="1" stroke="#596275" stroke-width=".8" fill="none"/><rect x="887.5" y="482.7999999999999" width="5.2" height="5.6" rx="1" stroke="#596275" stroke-width=".8" fill="#8b95a8"/><path d="M902 482.69999999999993 h5.6 M903.6 482.5999999999999 v-.7 a.6 .6 0 0 1 .6 -.6 h1.2 a.6 .6 0 0 1 .6 .6 v.7" stroke="#596275" stroke-width=".8" fill="none"/><path d="M902.8 482.9999999999999 l.3 4.4 a.6 .6 0 0 0 .6 .5 h2.2 a.6 .6 0 0 0 .6 -.5 l.3 -4.4" stroke="#596275" stroke-width=".8" fill="none"/><path d="M903.7 484.3999999999999 h2.2 M903.8 485.7999999999999 h2" stroke="#596275" stroke-width=".6" fill="none"/></svg>
<div class="a" style="left:45px;top:497.6999999999999px;width:870.8px;height:0.8px;background:#8491a9;"></div>
<div class="t" style="top:506.30px;font-size:7.8px;line-height:7.8px;color:#30374a;left:100.9px;transform:scaleX(0.94);transform-origin:0 50%;">Send people update to listener</div>
<div class="t" style="top:506.30px;font-size:7.8px;line-height:7.8px;color:#30374a;left:410px;transform:scaleX(0.94);transform-origin:0 50%;">Send payload to HTTP connection</div>
<div class="a" style="left:668.8px;top:507.1999999999999px;width:5.8px;height:5.8px;background:transparent;border-radius:50%;border:1px solid #2361ad"></div>
<div class="t" style="top:506.30px;font-size:7.8px;line-height:7.8px;color:#30374a;left:677px;transform:scaleX(0.94);transform-origin:0 50%;">No</div>
<svg style="left:748px;top:506.89999999999986px" width="6" height="6" viewBox="0 0 6 6"><path d="M3 0 V6 M.4 1.5 L5.6 4.5 M5.6 1.5 L.4 4.5" stroke="#1f5fad" stroke-width="1.4" fill="none"/></svg>
<div class="t" style="top:506.30px;font-size:7.8px;line-height:7.8px;color:#30374a;left:757px;transform:scaleX(0.94);transform-origin:0 50%;">New</div>
<svg style="left:0;top:0" width="936" height="542"><path d="M79 503.7999999999999 h8.6 l1 2.2 h-9.6 Z" fill="#2c7dac"/><rect x="79" y="506.89999999999986" width="15.9" height="10" rx=".4" fill="#2c7dac"/></svg>
<div class="t" style="top:509.29px;font-size:5.8px;line-height:5.8px;color:#9cc3da;left:-113px;width:400px;text-align:center;transform:scaleX(0.92);transform-origin:50% 50%;">http://</div>
<svg style="left:0;top:0" width="936" height="542"><path d="M824 513.1999999999999 l.4 -2 l3.1 -3.1 l1.6 1.6 l-3.1 3.1 Z" fill="#434a5b"/><path d="M828 507.5999999999999 l.5 -.5 a.5 .5 0 0 1 .7 0 l.9 .9 a.5 .5 0 0 1 0 .7 l-.5 .5 Z" fill="#434a5b"/><path d="M839.4 505.9999999999999 h3.6 l2.6 2.6 v5 h-6.2 Z" stroke="#596275" stroke-width=".8" fill="none" stroke-linejoin="round"/><path d="M843 505.9999999999999 v2.6 h2.6" stroke="#596275" stroke-width=".7" fill="none"/><path d="M841 512.3999999999999 l1.5 -3 l1.5 3 M841.6 511.1999999999999 h2" stroke="#596275" stroke-width=".6" fill="none"/><path d="M855 506.89999999999986 l5.6 3.1 l-5.6 3.1 Z" fill="#434a5b"/><rect x="870.1" y="506.9999999999999" width="5.9" height="6" fill="#6c7589"/><rect x="885.4" y="505.9999999999999" width="5.2" height="6" rx="1" stroke="#596275" stroke-width=".8" fill="none"/><rect x="887.5" y="508.1999999999999" width="5.2" height="5.6" rx="1" stroke="#596275" stroke-width=".8" fill="#8b95a8"/><path d="M902 508.0999999999999 h5.6 M903.6 507.9999999999999 v-.7 a.6 .6 0 0 1 .6 -.6 h1.2 a.6 .6 0 0 1 .6 .6 v.7" stroke="#596275" stroke-width=".8" fill="none"/><path d="M902.8 508.39999999999986 l.3 4.4 a.6 .6 0 0 0 .6 .5 h2.2 a.6 .6 0 0 0 .6 -.5 l.3 -4.4" stroke="#596275" stroke-width=".8" fill="none"/><path d="M903.7 509.7999999999999 h2.2 M903.8 511.1999999999999 h2" stroke="#596275" stroke-width=".6" fill="none"/></svg>
<!-- sidebar -->
<div class="a" style="left:0px;top:83px;width:34px;height:457.7px;background:#03254c;border-radius:0 0 0 2.5px"></div>
<div class="a" style="left:6.9px;top:122.8px;width:21px;height:21px;background:#d20f4e;border-radius:1.5px"></div>
<svg style="left:11.5px;top:100.5px" width="11" height="12" viewBox="0 0 11 12"><ellipse cx="5.5" cy="2.2" rx="5.2" ry="2.1" fill="#fff"/><path d="M.3 3.6 a5.2 2.1 0 0 0 10.4 0 v1.9 a5.2 2.1 0 0 1 -10.4 0 Z M.3 6.7 a5.2 2.1 0 0 0 10.4 0 v1.9 a5.2 2.1 0 0 1 -10.4 0 Z" fill="#fff"/><path d="M.3 9.7 a5.2 1.8 0 0 0 10.4 0 v.3 a5.2 2 0 0 1 -10.4 0 Z" fill="#fff"/></svg>
<svg style="left:10.9px;top:126.2px" width="12.1" height="11.2" viewBox="0 0 12.1 11.2"><path d="M0 3.8 H3.5 V2.9 A1.45 1.45 0 1 1 5.3 2.9 V3.8 H8 V6.6 H9.4 A1.45 1.45 0 1 1 9.4 8.6 H8 V11.2 H5.7 V9.6 A1.35 1.35 0 0 0 3 9.6 V11.2 H0 Z" fill="#fff"/></svg>
<svg style="left:10.9px;top:152.3px" width="12.5" height="12.9" viewBox="0 0 11 12" preserveAspectRatio="none"><path d="M0 1.6 H11 V12 H0 Z" fill="#fff"/><g fill="#3c5478"><rect x=".9" y="4" width="2.6" height="2"/><rect x="4.2" y="4" width="2.6" height="2"/><rect x="7.5" y="4" width="2.6" height="2"/><rect x=".9" y="6.6" width="2.6" height="2"/><rect x="4.2" y="6.6" width="2.6" height="2"/><rect x="7.5" y="6.6" width="2.6" height="2"/><rect x=".9" y="9.2" width="2.6" height="2"/><rect x="4.2" y="9.2" width="2.6" height="2"/><rect x="7.5" y="9.2" width="2.6" height="2"/></g><rect x="2.2" y="0" width="1.5" height="3" rx=".6" fill="#fff" stroke="#03254c" stroke-width=".4"/><rect x="7.3" y="0" width="1.5" height="3" rx=".6" fill="#fff" stroke="#03254c" stroke-width=".4"/></svg>
<svg style="left:11.4px;top:179.3px" width="11" height="11" viewBox="0 0 11 11"><circle cx="5.5" cy="5.5" r="4.6" stroke="#fff" stroke-width="1.4" fill="none"/><path d="M7.9 3.1 L6.4 6.4 L3.1 7.9 L4.6 4.6 Z" fill="#fff"/><circle cx="5.5" cy="5.5" r=".7" fill="#03254c"/></svg>
<svg style="left:11.4px;top:206.4px" width="11.4" height="10.6" viewBox="0 0 11.4 10.6"><rect x="0" y="0" width="11.4" height="2.6" fill="#fff"/><path d="M.7 3.3 H10.7 V10.6 H.7 Z" fill="#fff"/><rect x="4" y="4.6" width="3.4" height="1.3" rx=".4" fill="#03254c"/></svg>
<svg style="left:10.3px;top:230.8px" width="13.4" height="12.6" viewBox="0 0 13 11" preserveAspectRatio="none"><circle cx="6.5" cy="3" r="2.5" fill="#fff"/><path d="M2.6 11 V8.6 A3 3 0 0 1 5.6 5.8 H7.4 A3 3 0 0 1 10.4 8.6 V11 Z" fill="#fff"/><circle cx="2.2" cy="2.6" r="1.7" fill="#fff"/><circle cx="10.8" cy="2.6" r="1.7" fill="#fff"/><path d="M0 8.6 V6.8 A2 2 0 0 1 2 4.8 H3.6 A4 4 0 0 0 2 8.6 Z M13 8.6 V6.8 A2 2 0 0 0 11 4.8 H9.4 A4 4 0 0 1 11 8.6 Z" fill="#fff"/></svg>
<svg style="left:10.2px;top:257.8px" width="13.6" height="11" viewBox="0 0 13.6 11"><path d="M.5 0 V10.4 H13.6" stroke="#fff" stroke-width="1" fill="none"/><path d="M2.6 7.6 L5.6 4.6 L7.6 6.6 L11 3" stroke="#fff" stroke-width="1.4" fill="none"/><path d="M8.6 1.2 H12.8 V5.4 Z" fill="#fff"/></svg>
<div class="t" style="top:529.30px;font-size:7.8px;line-height:7.8px;color:#8b9096;left:533px;width:400px;text-align:right;transform:scaleX(0.93);transform-origin:100% 50%;">© 2018 <span style="color:#20639b">etlworks LLC</span>. All Rights Reserved.</div>
<!-- modal -->
<div class="a" style="left:181px;top:98.8px;width:598.6px;height:297.8px;background:#fff;border-radius:2px;box-shadow:0 .5px 1.5px rgba(0,0,20,.14)"></div>
<div class="t" style="top:110.52px;font-size:9.9px;line-height:9.9px;color:#454a50;left:188.1px;transform:scaleX(0.94);transform-origin:0 50%;">Select Flow Type</div>
<div class="a" style="left:267.2px;top:107px;width:493.4px;height:19px;background:#fff;border:1px solid #2a8af0;border-radius:2.5px;box-shadow:0 0 1px .3px rgba(42,138,240,.45)"></div>
<div class="a" style="left:274px;top:111.5px;width:0.7px;height:10px;background:#777;"></div>
<div class="t" style="top:112.60px;font-size:7.8px;line-height:7.8px;color:#c4c8cc;left:275px;transform:scaleX(0.94);transform-origin:0 50%;">Search...</div>
<svg style="left:745.6px;top:111.3px" width="8" height="8" viewBox="0 0 8 8"><circle cx="3.3" cy="3.3" r="2.6" stroke="#cfcfcf" stroke-width=".8" fill="none"/><path d="M5.2 5.2 L7.6 7.6" stroke="#cfcfcf" stroke-width=".9"/></svg>
<svg style="left:766.2px;top:114px" width="5" height="5" viewBox="0 0 5 5"><path d="M.3 .3 L4.7 4.7 M4.7 .3 L.3 4.7" stroke="#9e9e9e" stroke-width="1.1" fill="none"/></svg>
<div class="a" style="left:181px;top:134.2px;width:598.6px;height:0.8px;background:#e3e5e8;"></div>
<div class="a" style="left:181px;top:135px;width:598.6px;height:1.2px;background:linear-gradient(#f1f2f3,#fff);"></div>
<div class="a" style="left:181px;top:135px;width:72.6px;height:18.9px;background:#eef5fd;"></div>
<div class="a" style="left:253.4px;top:135px;width:0.8px;height:234.3px;background:#e6e8ea;"></div>
<div class="a" style="left:181px;top:135px;width:598.6px;height:234.3px;overflow:hidden">
<div class="t" style="left:7.6px;top:5.00px;font-size:7.8px;line-height:7.8px;color:#3b4045;transform:scaleX(.93);transform-origin:0 50%">All</div>
<div class="t" style="left:7.6px;top:25.33px;font-size:7.8px;line-height:7.8px;color:#3b4045;transform:scaleX(.93);transform-origin:0 50%">Amazon</div>
<div class="t" style="left:7.6px;top:45.66px;font-size:7.8px;line-height:7.8px;color:#3b4045;transform:scaleX(.93);transform-origin:0 50%">Common</div>
<div class="t" style="left:7.6px;top:65.99px;font-size:7.8px;line-height:7.8px;color:#3b4045;transform:scaleX(.93);transform-origin:0 50%">Databases</div>
<div class="t" style="left:7.6px;top:86.32px;font-size:7.8px;line-height:7.8px;color:#3b4045;transform:scaleX(.93);transform-origin:0 50%">EDI</div>
<div class="t" style="left:7.6px;top:106.65px;font-size:7.8px;line-height:7.8px;color:#3b4045;transform:scaleX(.93);transform-origin:0 50%">Email</div>
<div class="t" style="left:7.6px;top:126.98px;font-size:7.8px;line-height:7.8px;color:#3b4045;transform:scaleX(.93);transform-origin:0 50%">Facebook</div>
<div class="t" style="left:7.6px;top:147.31px;font-size:7.8px;line-height:7.8px;color:#3b4045;transform:scaleX(.93);transform-origin:0 50%">Files</div>
<div class="t" style="left:7.6px;top:167.64px;font-size:7.8px;line-height:7.8px;color:#3b4045;transform:scaleX(.93);transform-origin:0 50%">Google</div>
<div class="t" style="left:7.6px;top:187.97px;font-size:7.8px;line-height:7.8px;color:#3b4045;transform:scaleX(.93);transform-origin:0 50%">HL7</div>
<div class="t" style="left:7.6px;top:208.30px;font-size:7.8px;line-height:7.8px;color:#3b4045;transform:scaleX(.93);transform-origin:0 50%">Marketo</div>
<div class="t" style="left:7.6px;top:228.63px;font-size:7.8px;line-height:7.8px;color:#3b4045;transform:scaleX(.93);transform-origin:0 50%">Pipeline</div>
<svg style="left:148.0px;top:214.0px" width="33" height="24" viewBox="0 0 33 24"><g fill="#6f72b7" stroke="#6f72b7" stroke-width=".5" stroke-linejoin="round"><path d="M1.8 13.2 L6.6 13.2 L6.4 16.6 L.9 16.6 Z"/><path d="M9.8 9.5 L14.9 9.5 L13.8 17.1 L8.5 17.1 Z"/><path d="M17.5 6.3 L23 6.3 L20.5 18.4 L15.4 18.4 Z"/><path d="M26.4 .9 L31.8 .9 L27.3 22 L22 22 Z"/></g></svg>
<svg style="left:319.4px;top:214.0px" width="33" height="24" viewBox="0 0 33 24"><g fill="#6f72b7" stroke="#6f72b7" stroke-width=".5" stroke-linejoin="round"><path d="M1.8 13.2 L6.6 13.2 L6.4 16.6 L.9 16.6 Z"/><path d="M9.8 9.5 L14.9 9.5 L13.8 17.1 L8.5 17.1 Z"/><path d="M17.5 6.3 L23 6.3 L20.5 18.4 L15.4 18.4 Z"/><path d="M26.4 .9 L31.8 .9 L27.3 22 L22 22 Z"/></g></svg>
<svg style="left:491.4px;top:214.0px" width="33" height="24" viewBox="0 0 33 24"><g fill="#6f72b7" stroke="#6f72b7" stroke-width=".5" stroke-linejoin="round"><path d="M1.8 13.2 L6.6 13.2 L6.4 16.6 L.9 16.6 Z"/><path d="M9.8 9.5 L14.9 9.5 L13.8 17.1 L8.5 17.1 Z"/><path d="M17.5 6.3 L23 6.3 L20.5 18.4 L15.4 18.4 Z"/><path d="M26.4 .9 L31.8 .9 L27.3 22 L22 22 Z"/></g></svg>
</div>
<div class="a" style="left:331.4px;top:156.8px;width:27.7px;height:19px;background:#a084f8;border-radius:1.6px"></div>
<div class="t" style="top:164.29px;font-size:7.1px;line-height:7.1px;color:#ffe53b;font-weight:bold;left:145.3px;width:400px;text-align:center;transform:scaleX(0.98);transform-origin:50% 50%;"><span style="color:#fff">&lt;</span>XSLT<span style="color:#fff">&gt;</span></div>
<div class="t" style="top:184.10px;font-size:7.8px;line-height:7.8px;color:#33383d;left:145.39999999999998px;width:400px;text-align:center;transform:scaleX(0.94);transform-origin:50% 50%;">Apply XSL style sheet to the XML file(s)</div>
<svg style="left:508.5px;top:155.3px" width="15.9" height="21.7" viewBox="0 0 16.2 21.5"><path d="M1.2 0 H10.6 L16.2 5.6 V20.3 A1.2 1.2 0 0 1 15 21.5 H1.2 A1.2 1.2 0 0 1 0 20.3 V1.2 A1.2 1.2 0 0 1 1.2 0 Z" fill="#dfcfab"/><path d="M10.6 0 L16.2 5.6 H11.6 A1 1 0 0 1 10.6 4.6 Z" fill="#8c8068"/></svg>
<div class="t" style="top:163.74px;font-size:12px;line-height:12px;color:#fff;font-weight:bold;left:316.6px;width:400px;text-align:center;transform:scaleX(1.06);transform-origin:50% 50%;">#</div>
<div class="t" style="top:184.10px;font-size:7.8px;line-height:7.8px;color:#33383d;left:316.79999999999995px;width:400px;text-align:center;transform:scaleX(0.94);transform-origin:50% 50%;">Check Number of Files</div>
<svg style="left:678.8px;top:154.8px" width="19.8" height="22.8" viewBox="0 0 19.8 22.8"><path d="M6.4 0 H14 L19.8 5 V18 A1 1 0 0 1 18.8 19 H6.4 A1 1 0 0 1 5.4 18 V1 A1 1 0 0 1 6.4 0 Z" fill="#5bc5bc"/><path d="M14 0 L19.8 5 H15 A1 1 0 0 1 14 4 Z" fill="#4a7f80"/><path d="M1 3.6 H9.4 L14.7 8.6 V21.8 A1 1 0 0 1 13.7 22.8 H1 A1 1 0 0 1 0 21.8 V4.6 A1 1 0 0 1 1 3.6 Z" fill="#5bc5bc" stroke="#fff" stroke-width=".8"/><path d="M9.4 3.6 L14.7 8.6 H10.4 A1 1 0 0 1 9.4 7.6 Z" fill="#4a7f80"/></svg>
<div class="t" style="top:184.10px;font-size:7.8px;line-height:7.8px;color:#33383d;left:488.6px;width:400px;text-align:center;transform:scaleX(0.94);transform-origin:50% 50%;">Copy Files</div>
<svg style="left:334.3px;top:220.5px" width="21.7" height="19.2" viewBox="0 0 21.7 19.2"><path d="M1 0 H12.4 A1 1 0 0 1 13.4 1 V3.8 H0 V1 A1 1 0 0 1 1 0 Z" fill="#a5b9e1"/><rect x="0" y="3.7" width="14" height=".9" fill="#eceff6"/><rect x="0" y="4.5" width="21.7" height="14.7" rx="1.2" fill="#adc0e4"/></svg>
<div class="t" style="top:229.61px;font-size:6.6px;line-height:6.6px;color:#fff;font-weight:bold;left:145.2px;width:400px;text-align:center;transform:scaleX(0.96);transform-origin:50% 50%;">NEW</div>
<div class="t" style="top:248.30px;font-size:7.8px;line-height:7.8px;color:#33383d;left:145.2px;width:400px;text-align:center;transform:scaleX(0.94);transform-origin:50% 50%;">Create Folder(s)</div>
<svg style="left:0;top:0" width="936" height="542"><rect x="500" y="223.1" width="11" height="14.6" rx=".7" fill="#17588a"/><g fill="#fff"><rect x="504.5" y="225.7" width="2.3" height="1.5"/><rect x="501.0" y="227.9" width="1.7" height="1.7"/><rect x="504.7" y="227.4" width="2.4" height="2"/><rect x="507.9" y="227.9" width="1.7" height="1.7"/><rect x="501.5" y="231.7" width="4.2" height="3.5"/><rect x="507.9" y="231.2" width="2" height="1.7"/></g><path d="M505.7 226.6 v1.4 M502.4 228.79999999999998 h6 M504.6 229.29999999999998 l-1.4 2.6 M506.6 229.29999999999998 l1.6 2.2 M505.6 232.7 h2.6" stroke="#e4edf4" stroke-width=".55" fill="none"/><rect x="522.2" y="223.1" width="11" height="14.6" rx=".7" fill="#17588a"/><g fill="#fff"><rect x="526.7" y="225.7" width="2.3" height="1.5"/><rect x="523.2" y="227.9" width="1.7" height="1.7"/><rect x="526.9" y="227.4" width="2.4" height="2"/><rect x="530.1" y="227.9" width="1.7" height="1.7"/><rect x="523.7" y="231.7" width="4.2" height="3.5"/><rect x="530.1" y="231.2" width="2" height="1.7"/></g><path d="M527.9000000000001 226.6 v1.4 M524.6 228.79999999999998 h6 M526.8000000000001 229.29999999999998 l-1.4 2.6 M528.8000000000001 229.29999999999998 l1.6 2.2 M527.8000000000001 232.7 h2.6" stroke="#e4edf4" stroke-width=".55" fill="none"/><path d="M512.3 230.5 h7.8 M517.4 228 l3 2.5 l-3 2.5" stroke="#7a7a7a" stroke-width="1.2" fill="none"/></svg>
<div class="t" style="top:248.30px;font-size:7.8px;line-height:7.8px;color:#33383d;left:316.9px;width:400px;text-align:center;transform:scaleX(0.94);transform-origin:50% 50%;">Database change replication</div>
<svg style="left:680.8px;top:219.4px" width="15.6" height="21.8" viewBox="0 0 15.6 21.8"><path d="M1.4 0 H10 L15.6 5.6 V20.4 A1.4 1.4 0 0 1 14.2 21.8 H1.4 A1.4 1.4 0 0 1 0 20.4 V1.4 A1.4 1.4 0 0 1 1.4 0 Z" fill="#ec5b4b"/><path d="M10 0 L15.6 5.6 H11 A1 1 0 0 1 10 4.6 Z" fill="#8a3a31"/><g stroke="#fff" stroke-width="1" fill="none"><path d="M3 10.4 H12.4"/><path d="M5.8 10.2 V8.9 A1 1 0 0 1 6.8 7.9 H8.6 A1 1 0 0 1 9.6 8.9 V10.2"/><path d="M4.2 10.8 L4.6 17.8 A.8 .8 0 0 0 5.4 18.5 H10 A.8 .8 0 0 0 10.8 17.8 L11.2 10.8"/><path d="M6 12.4 V16.6 M7.7 12.4 V16.6 M9.4 12.4 V16.6"/></g></svg>
<div class="t" style="top:248.30px;font-size:7.8px;line-height:7.8px;color:#33383d;left:488.4px;width:400px;text-align:center;transform:scaleX(0.94);transform-origin:50% 50%;">Delete Files</div>
<div class="a" style="left:330.6px;top:284.8px;width:29.2px;height:19.9px;background:#f2dd55;border-radius:.6px"></div>
<div class="t" style="top:293.62px;font-size:11.2px;line-height:11.2px;color:#3a3a3a;font-weight:bold;left:-41.60000000000002px;width:400px;text-align:right;transform:scaleX(0.95);transform-origin:100% 50%;">JS</div>
<div class="t" style="top:313.30px;font-size:7.8px;line-height:7.8px;color:#33383d;left:145.2px;width:400px;text-align:center;transform:scaleX(0.94);transform-origin:50% 50%;">Execute JavaScript</div>
<div class="a" style="left:501.3px;top:284.5px;width:30.7px;height:21.2px;background:#ee5b4a;border-radius:1.4px"></div>
<div class="t" style="top:291.44px;font-size:8.7px;line-height:8.7px;color:#ffe53b;font-weight:bold;left:316.70000000000005px;width:400px;text-align:center;transform:scaleX(1.0);transform-origin:50% 50%;"><span style="color:#fff">&lt;</span>XML<span style="color:#fff">&gt;</span></div>
<div class="t" style="top:313.30px;font-size:7.8px;line-height:7.8px;color:#33383d;left:316.79999999999995px;width:400px;text-align:center;transform:scaleX(0.94);transform-origin:50% 50%;">Execute scenario in XML format</div>
<div class="a" style="left:674.9px;top:285.6px;width:27.5px;height:19.4px;background:#86736d;border-radius:1.6px"></div>
<div class="t" style="top:291.67px;font-size:8.3px;line-height:8.3px;color:#33d1f5;font-weight:bold;left:677px;transform:scaleX(0.84);transform-origin:0 50%;">SQL<span style="color:#fff">&gt;<span style="position:relative;top:1.2px;font-size:6px">_</span></span></div>
<div class="t" style="top:313.30px;font-size:7.8px;line-height:7.8px;color:#33383d;left:488.20000000000005px;width:400px;text-align:center;transform:scaleX(0.9);transform-origin:50% 50%;">Execute SQL</div>
<div class="a" style="left:181px;top:369.3px;width:598.6px;height:0.8px;background:#e3e5e8;"></div>
<div class="a" style="left:741px;top:375px;width:30.6px;height:16px;background:#f0f2f4;border-radius:2px"></div>
<div class="t" style="top:379.40px;font-size:7.8px;line-height:7.8px;color:#2f353a;left:556.2px;width:400px;text-align:center;transform:scaleX(0.96);transform-origin:50% 50%;">Close</div>
</div>
</body>
</html>
